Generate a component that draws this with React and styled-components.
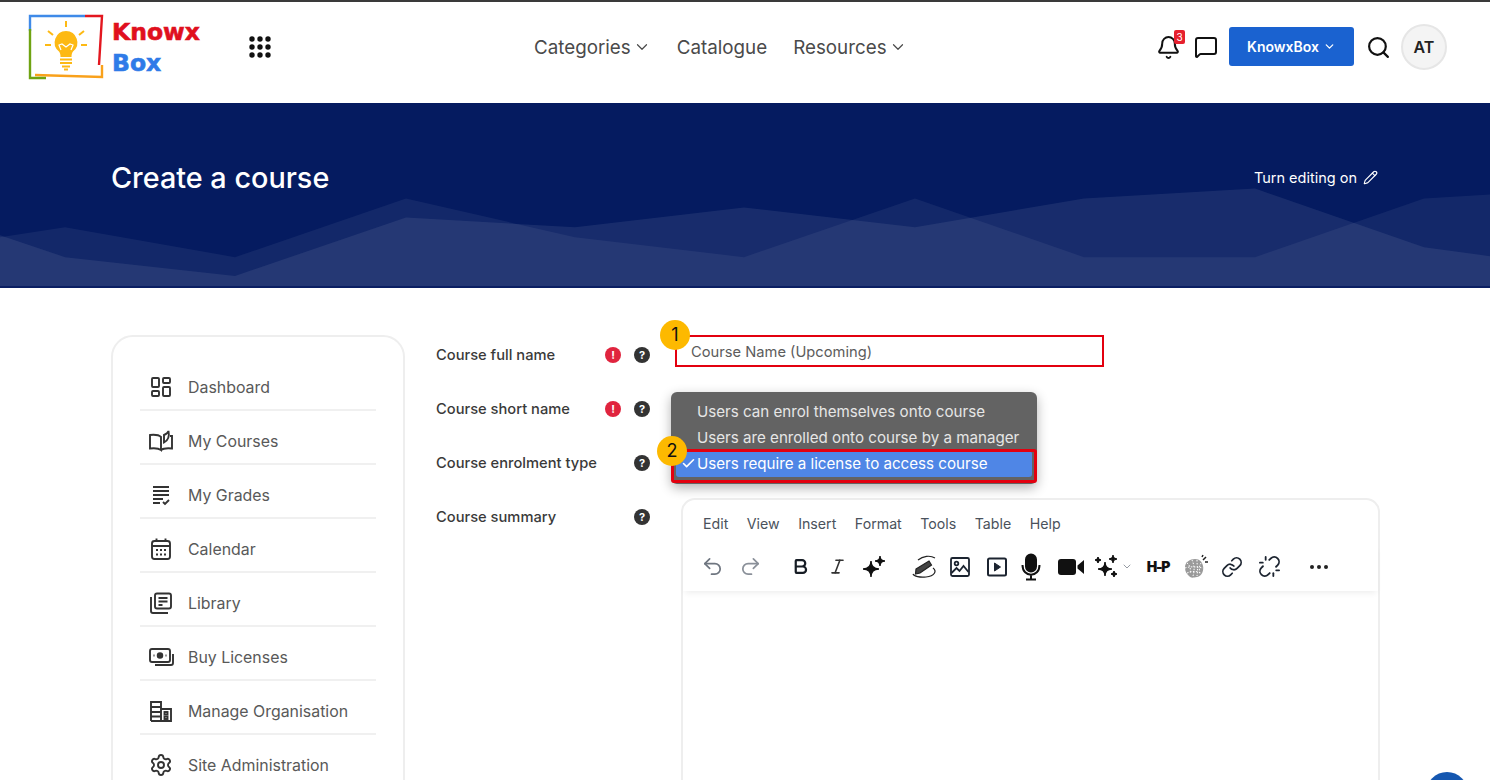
import React from "react";
import styled, { createGlobalStyle } from "styled-components";
import {
  Bell,
  Bold,
  Check,
  ChevronDown,
  Italic,
  LayoutDashboard,
  Link,
  MessageSquare,
  Pencil,
  Redo2,
  Search,
  Settings,
  Undo2,
  Unlink,
} from "lucide-react";

const GlobalStyle = createGlobalStyle`
  html, body {
    margin: 0;
    padding: 0;
    background: #fff;
    font-family: Inter, "Liberation Sans", sans-serif;
    overflow: hidden;
  }
`;

const Page = styled.div`
  position: relative;
  height: 780px;
  overflow: hidden;
  background: #fff;
`;

const TopBar = styled.header`
  display: flex;
  align-items: center;
  box-sizing: border-box;
  height: 103px;
  padding: 0 43px 11px 27px;
  border-top: 2px solid #3a3a3a;
  background: #fff;
`;

const Brand = styled.div`
  display: flex;
  align-items: center;
  gap: 5px;
  width: 222px;
`;

const BrandText = styled.div`
  display: flex;
  flex-direction: column;
  gap: 5px;
`;

const BrandLine = styled.span`
  font-family: "DejaVu Sans", sans-serif;
  font-weight: 700;
  font-size: 23.5px;
  line-height: 26px;
  color: ${(p) => p.$color};
  -webkit-text-stroke: 0.6px ${(p) => p.$color};
`;

const AppsButton = styled.div`
  display: flex;
  width: 22px;
`;

const MainNav = styled.nav`
  display: flex;
  align-items: center;
  gap: 26px;
  margin-left: 263px;
`;

const NavLink = styled.div`
  display: inline-flex;
  align-items: center;
  gap: 2px;
  font-size: 18.8px;
  color: #4a4a4a;
  white-space: nowrap;
`;

const NavActions = styled.div`
  display: flex;
  align-items: center;
  margin-left: auto;
  gap: 12px;
`;

const BellWrap = styled.div`
  position: relative;
  display: flex;
  margin-right: 1px;
`;

const BellBadge = styled.span`
  position: absolute;
  top: -5px;
  right: -4px;
  width: 11px;
  height: 14px;
  border-radius: 2px;
  background: #e6202e;
  color: #fff;
  font-size: 10px;
  line-height: 14px;
  text-align: center;
`;

const OrgButton = styled.div`
  display: flex;
  align-items: center;
  justify-content: center;
  gap: 4px;
  width: 125px;
  height: 39px;
  margin: 0 0 2px -1px;
  border-radius: 3px;
  background: #1a62d0;
  color: #fff;
  font-size: 14px;
  font-weight: 600;
`;

const Avatar = styled.div`
  display: flex;
  align-items: center;
  justify-content: center;
  box-sizing: border-box;
  width: 46px;
  height: 46px;
  margin-left: -2px;
  border: 2px solid #e6e6e6;
  border-radius: 50%;
  background: #f4f4f4;
  color: #222;
  font-size: 16px;
  font-weight: 600;
`;

const Hero = styled.section`
  position: relative;
  display: flex;
  align-items: center;
  justify-content: space-between;
  box-sizing: border-box;
  height: 185px;
  padding: 0 112px 35px 111px;
  border-bottom: 2px solid #0b1f63;
  background: #051b60;
  color: #fff;
`;

const WaveSvg = styled.svg`
  position: absolute;
  inset: 0;
  width: 100%;
  height: 100%;
`;

const HeroTitle = styled.h1`
  position: relative;
  margin: 0;
  font-size: 28.8px;
  font-weight: 500;
`;

const EditToggle = styled.div`
  position: relative;
  display: flex;
  align-items: center;
  gap: 6px;
  font-size: 14.5px;
`;

const Main = styled.main`
  display: flex;
  align-items: flex-start;
  padding: 40px 0 0 111px;
`;

const Sidebar = styled.aside`
  box-sizing: border-box;
  width: 294px;
  margin-top: 7px;
  padding: 28px 27px 20px;
  border: 2px solid #eeeeee;
  border-radius: 22px;
`;

const SideItem = styled.div`
  display: flex;
  align-items: center;
  box-sizing: border-box;
  height: 46px;
  margin-bottom: 8px;
  border-bottom: 2px solid #f0f0f0;
  font-size: 15.9px;
  color: #595959;
  white-space: nowrap;

  &:last-child {
    border-bottom-color: transparent;
  }
`;

const SideIcon = styled.span`
  display: flex;
  justify-content: center;
  width: 42px;
  margin-right: 6px;
`;

const Form = styled.div`
  position: relative;
  margin-left: 31px;
`;

const FormRow = styled.div`
  position: relative;
  display: flex;
  align-items: flex-start;
  min-height: 54px;
`;

const FieldLabel = styled.div`
  width: 169px;
  font-size: 14.7px;
  font-weight: 500;
  line-height: 54px;
  color: #3a3a3a;
  white-space: nowrap;
`;

const StatusIcon = styled.span`
  display: flex;
  align-items: center;
  justify-content: center;
  width: 16px;
  height: 16px;
  margin-top: 19px;
  margin-right: ${(p) => (p.$kind === "error" ? 13 : 0)}px;
  border-radius: 50%;
  background: ${(p) => (p.$kind === "error" ? "#e0243e" : "#333")};
  color: #fff;
  font-size: 11px;
  font-weight: 700;
`;

const StatusSpacer = styled.span`
  width: 29px;
`;

const NameInput = styled.input`
  box-sizing: border-box;
  width: 429px;
  height: 32px;
  margin: 7px 0 0 25px;
  padding: 2px 14px 0;
  border: 2px solid #e3000f;
  border-radius: 0;
  outline: none;
  font-family: inherit;
  font-size: 14.7px;
  color: #5c5c5c;
`;

const StepBadge = styled.span`
  position: absolute;
  left: ${(p) => p.$left}px;
  top: ${(p) => p.$top}px;
  z-index: 3;
  width: 30px;
  height: 30px;
  border-radius: 50%;
  background: #fdb900;
  color: #111;
  font-size: 18px;
  line-height: 30px;
  text-align: center;
`;

const Editor = styled.div`
  box-sizing: border-box;
  width: 699px;
  height: 420px;
  margin: 8px 0 0 31px;
  border: 2px solid #eeeeee;
  border-radius: 14px;
`;

const EditorMenu = styled.div`
  display: flex;
  gap: 18.5px;
  padding: 15px 0 0 20px;
  font-size: 14.2px;
  line-height: 18px;
  color: #4a525c;
`;

const Toolbar = styled.div`
  display: flex;
  align-items: center;
  height: 45px;
  margin-top: 11px;
  padding: 0 0 2px 11px;
  box-shadow: 0 4px 6px -2px rgba(0, 0, 0, 0.07);
`;

const ToolSlot = styled.span`
  display: flex;
  align-items: center;
  justify-content: center;
  flex: none;
  width: ${(p) => p.$w || 36}px;
  margin-left: ${(p) => p.$ml}px;
`;

const H5p = styled.span`
  font-size: 14px;
  font-weight: 900;
  letter-spacing: -1.2px;
  color: #111;
`;

const SelectMenu = styled.div`
  position: absolute;
  left: 235px;
  top: 64px;
  z-index: 2;
  box-sizing: border-box;
  width: 366px;
  height: 92px;
  padding: 7px 5px;
  border-radius: 6px;
  background: #636363;
  box-shadow: 0 4px 12px rgba(0, 0, 0, 0.3);
`;

const SelectOption = styled.div`
  position: relative;
  height: 26px;
  padding-left: 21px;
  border-radius: 3px;
  background: ${(p) => (p.$selected ? "#4f86e6" : "transparent")};
  color: ${(p) => (p.$selected ? "#fff" : "#e6e6e6")};
  font-size: 15.15px;
  line-height: 26px;
  white-space: nowrap;

  ${(p) =>
    p.$selected &&
    `&::after {
      content: "";
      position: absolute;
      inset: -2px -5px -6px -5px;
      border: 3px solid #e3000f;
      border-radius: 3px;
    }`}
`;

const CheckMark = styled.span`
  position: absolute;
  left: 5px;
  top: 5px;
  display: flex;
`;

const ChatBubble = styled.div`
  position: absolute;
  left: 1426px;
  top: 772px;
  width: 42px;
  height: 42px;
  border-radius: 50%;
  background: #1557b0;
`;

const star = (x, y, r) =>
  `M${x} ${y - r}Q${x} ${y} ${x + r} ${y}Q${x} ${y} ${x} ${y + r}Q${x} ${y} ${x - r} ${y}Q${x} ${y} ${x} ${y - r}Z`;

function Logo() {
  return (
    <svg width="80" height="68" viewBox="0 0 80 68" fill="none" strokeWidth="2.4">
      <path d="M3 18V3H58" stroke="#3f8ae8" />
      <path d="M58 3H75L72 52" stroke="#e3171f" />
      <path d="M8 62L75 64V52" stroke="#f9a11b" />
      <path d="M3 16V65H19" stroke="#6fa312" />
      <path
        d="M39 18a11.5 11.5 0 0 1 7 20.5c-1 1-1.5 3-1.5 5.5h-11c0-2.5-.5-4.5-1.5-5.5a11.5 11.5 0 0 1 7-20.5z"
        fill="#fdb913"
      />
      <path d="M34 37l-2-5 3-1 4 3 4-3 3 1-2 5" stroke="#fff" strokeWidth="1.2" />
      <path
        d="M33 46.5h12M33 50h12M35 53.5h8M37 56.5h4M39 8v6M21 18l5 4M57 18l-5 4M18 32h6M54 32h6"
        stroke="#fdb913"
        strokeWidth="2"
      />
    </svg>
  );
}

function DotsGrid() {
  const dots = [];
  for (let r = 0; r < 3; r++) {
    for (let c = 0; c < 3; c++) {
      dots.push(<circle key={`${r}${c}`} cx={3 + c * 8} cy={3 + r * 8} r="2.7" fill="#111" />);
    }
  }
  return (
    <svg width="22" height="22" viewBox="0 0 22 22">
      {dots}
    </svg>
  );
}

function HeroWaves() {
  return (
    <WaveSvg viewBox="0 0 1490 184" preserveAspectRatio="none">
      <polygon
        points="0,133 65,155 235,174 406,115 575,125 744,105 915,125 1084,96 1255,86 1424,145 1490,154 1490,184 0,184"
        fill="rgba(255,255,255,0.08)"
      />
      <polygon
        points="0,135 65,125 235,155 406,96 575,135 744,155 915,96 1084,155 1255,155 1424,96 1490,92 1490,184 0,184"
        fill="rgba(255,255,255,0.06)"
      />
    </WaveSvg>
  );
}

const iconProps = { width: 26, height: 24, viewBox: "0 0 26 24", fill: "none", stroke: "#333", strokeWidth: 1.9 };

const CoursesIcon = () => (
  <svg {...iconProps}>
    <path d="M13 8c-2-2-6-2.5-11-2v13.5c5-.5 9 0 11 1.5V8z" />
    <path d="M13 21c2-1.5 6-2 11-1.5V7h-2M16 6c2.5-1 4-2 4.5-4 .8 4 .5 9-4.5 11.500V6z" />
  </svg>
);

const GradesIcon = () => (
  <svg {...iconProps}>
    <path d="M5 4h16M5 8h16M5 12h16M5 16h10M5 20h7M15 19l2 2 4-4" />
  </svg>
);

const CalendarIcon = () => (
  <svg {...iconProps}>
    <rect x="4" y="4" width="18" height="18" rx="2.5" />
    <path d="M4 9h18M8.5 1.5V5M17.5 1.5V5" />
    <path d="M8 13h2M12 13h2M16 13h2M8 17.5h2M12 17.5h2M16 17.5h2" strokeWidth="2" />
  </svg>
);

const LibraryIcon = () => (
  <svg {...iconProps}>
    <rect x="7" y="2.5" width="16" height="15" rx="2" />
    <path d="M10.5 7h9M10.5 10.5h9M10.5 14h4M3 6v14a2 2 0 0 0 2 2h15" />
  </svg>
);

const LicenseIcon = () => (
  <svg {...iconProps}>
    <rect x="2" y="4" width="20" height="13" rx="2" />
    <path d="M25 9v9a2 2 0 0 1-2 2H7" />
    <circle cx="12" cy="10.5" r="2.3" fill="#333" />
    <path d="M5.5 10.5h1M17.5 10.5h1" />
  </svg>
);

const OrganisationIcon = () => (
  <svg {...iconProps}>
    <path d="M3 22V3h10v19M3 22h20V10h-10M3 8h10M3 13h10M3 17.5h10" />
    <rect x="16.5" y="13" width="3" height="2.5" />
    <rect x="16.5" y="17.5" width="3" height="2.5" />
  </svg>
);

const SparkIcon = ({ many }) => (
  <svg width="26" height="26" viewBox="0 0 26 26" fill="#111" stroke="#111" strokeWidth="1.4">
    {many ? (
      <>
        <path d={star(12, 15, 7)} />
        <path d={star(20, 5, 4)} />
        <path d={star(21, 20, 3)} />
        <path d={star(5, 6, 3)} />
      </>
    ) : (
      <>
        <path d={star(11, 15, 8)} />
        <path d={star(20, 7, 5)} />
      </>
    )}
  </svg>
);

const PenIcon = () => (
  <svg width="28" height="28" viewBox="0 0 28 28" fill="none" stroke="#222" strokeWidth="1.2">
    <path d="M6 16L19 8l2.5 4L10 20l-4.5 1z" fill="#444" />
    <path d="M8 7c5-4 12-5 17-2M23 15c4 3 2 8-7 9-6 .7-12-.5-13-3" />
  </svg>
);

const ImageIcon = () => (
  <svg width="22" height="22" viewBox="0 0 22 22" fill="none" stroke="#1c2430" strokeWidth="1.8">
    <rect x="2" y="2" width="18" height="18" rx="1.5" />
    <circle cx="7.5" cy="7.5" r="1.8" />
    <path d="M2.5 17l5-5 3 3 4-5 5 6" />
  </svg>
);

const PlayIcon = () => (
  <svg width="22" height="22" viewBox="0 0 22 22" fill="none" stroke="#1c2430" strokeWidth="2">
    <rect x="2" y="2.5" width="18" height="17" rx="1.5" />
    <path d="M8.5 7v8l6-4z" fill="#1c2430" strokeWidth="1" />
  </svg>
);

const MicIcon = () => (
  <svg width="24" height="28" viewBox="0 0 24 28" fill="none" stroke="#111" strokeWidth="2">
    <rect x="7" y="1.5" width="10" height="17" rx="5" fill="#111" />
    <path d="M3.5 12c0 13 17 13 17 0M12 21.5V26M7 26.5h10" />
  </svg>
);

const VideoIcon = () => (
  <svg width="28" height="22" viewBox="0 0 28 22" fill="#111">
    <rect x="1" y="3" width="18" height="16" rx="3" />
    <path d="M20.5 9.5L27 4v14l-6.5-5.5z" />
  </svg>
);

const BrainIcon = () => (
  <svg width="28" height="28" viewBox="0 0 28 28" fill="#9a9a9a">
    <path d="M4 14c0-5 5-8 10-8s7 3 8 7-1 10-6 11-6 1-8-1-4-4-4-9z" />
    <g stroke="#fff" strokeWidth="1" strokeDasharray="1.5 1.5" fill="none">
      <path d="M6 10c3 2 4 6 3 11M11 7c2 4 3 10 1 16M16 7c0 5 1 10 0 16M20 10c-2 3-2 8-1 11M4 15c6-2 12-1 18 0M6 20c5-2 10-2 14 0" />
    </g>
    <path d="M22 7l3-3M24 9h3M21 4l1-2" stroke="#222" strokeWidth="1.5" />
  </svg>
);

const MoreDots = () => (
  <svg width="20" height="6" viewBox="0 0 20 6" fill="#222">
    <circle cx="3" cy="3" r="2" />
    <circle cx="10" cy="3" r="2" />
    <circle cx="17" cy="3" r="2" />
  </svg>
);

const sideItems = [
  { label: "Dashboard", icon: <LayoutDashboard size={24} color="#333" strokeWidth={1.9} /> },
  { label: "My Courses", icon: <CoursesIcon /> },
  { label: "My Grades", icon: <GradesIcon /> },
  { label: "Calendar", icon: <CalendarIcon /> },
  { label: "Library", icon: <LibraryIcon /> },
  { label: "Buy Licenses", icon: <LicenseIcon /> },
  { label: "Manage Organisation", icon: <OrganisationIcon /> },
  { label: "Site Administration", icon: <Settings size={24} color="#333" strokeWidth={1.9} /> },
];

const menuItems = ["Edit", "View", "Insert", "Format", "Tools", "Table", "Help"];

const tools = [
  { el: <Undo2 size={23} color="#6f7680" strokeWidth={1.8} />, ml: 0 },
  { el: <Redo2 size={23} color="#8a9099" strokeWidth={1.8} />, ml: 2 },
  { el: <Bold size={19} color="#161c24" strokeWidth={2.8} />, ml: 14 },
  { el: <Italic size={19} color="#333" strokeWidth={2} />, ml: 1 },
  { el: <SparkIcon />, ml: 0 },
  { el: <PenIcon />, ml: 15 },
  { el: <ImageIcon />, ml: 0 },
  { el: <PlayIcon />, ml: 1 },
  { el: <MicIcon />, ml: -2 },
  { el: <VideoIcon />, ml: 4 },
  { el: <SparkIcon many />, ml: -1 },
  { el: <ChevronDown size={13} color="#8a9099" strokeWidth={1.8} />, ml: -3, w: 12 },
  { el: <H5p>H-P</H5p>, ml: 7 },
  { el: <BrainIcon />, ml: 1 },
  { el: <Link size={22} color="#1c2430" strokeWidth={1.9} />, ml: 1 },
  { el: <Unlink size={23} color="#1c2430" strokeWidth={1.9} />, ml: 1 },
  { el: <MoreDots />, ml: 14 },
];

export default function App() {
  return (
    <Page>
      <GlobalStyle />
      <TopBar>
        <Brand>
          <Logo />
          <BrandText>
            <BrandLine $color="#e0101e">Knowx</BrandLine>
            <BrandLine $color="#2f7be8">Box</BrandLine>
          </BrandText>
        </Brand>
        <AppsButton>
          <DotsGrid />
        </AppsButton>
        <MainNav>
          <NavLink>
            Categories <ChevronDown size={18} strokeWidth={1.6} />
          </NavLink>
          <NavLink>Catalogue</NavLink>
          <NavLink>
            Resources <ChevronDown size={18} strokeWidth={1.6} />
          </NavLink>
        </MainNav>
        <NavActions>
          <BellWrap>
            <Bell size={25} color="#111" strokeWidth={1.9} />
            <BellBadge>3</BellBadge>
          </BellWrap>
          <MessageSquare size={24} color="#111" strokeWidth={2} />
          <OrgButton>
            KnowxBox <ChevronDown size={13} strokeWidth={2.4} />
          </OrgButton>
          <Search size={25} color="#111" strokeWidth={2.1} />
          <Avatar>AT</Avatar>
        </NavActions>
      </TopBar>

      <Hero>
        <HeroWaves />
        <HeroTitle>Create a course</HeroTitle>
        <EditToggle>
          Turn editing on <Pencil size={15} strokeWidth={1.8} />
        </EditToggle>
      </Hero>

      <Main>
        <Sidebar>
          {sideItems.map((item) => (
            <SideItem key={item.label}>
              <SideIcon>{item.icon}</SideIcon>
              {item.label}
            </SideItem>
          ))}
        </Sidebar>

        <Form>
          <FormRow>
            <FieldLabel>Course full name</FieldLabel>
            <StatusIcon $kind="error">!</StatusIcon>
            <StatusIcon $kind="help">?</StatusIcon>
            <NameInput readOnly value="Course Name (Upcoming)" />
            <StepBadge $left={224} $top={-8}>1</StepBadge>
          </FormRow>
          <FormRow>
            <FieldLabel>Course short name</FieldLabel>
            <StatusIcon $kind="error">!</StatusIcon>
            <StatusIcon $kind="help">?</StatusIcon>
          </FormRow>
          <FormRow>
            <FieldLabel>Course enrolment type</FieldLabel>
            <StatusSpacer />
            <StatusIcon $kind="help">?</StatusIcon>
          </FormRow>
          <FormRow>
            <FieldLabel>Course summary</FieldLabel>
            <StatusSpacer />
            <StatusIcon $kind="help">?</StatusIcon>
            <Editor>
              <EditorMenu>
                {menuItems.map((m) => (
                  <span key={m}>{m}</span>
                ))}
              </EditorMenu>
              <Toolbar>
                {tools.map((t, i) => (
                  <ToolSlot key={i} $ml={t.ml} $w={t.w}>
                    {t.el}
                  </ToolSlot>
                ))}
              </Toolbar>
            </Editor>
          </FormRow>

          <SelectMenu>
            <SelectOption>Users can enrol themselves onto course</SelectOption>
            <SelectOption>Users are enrolled onto course by a manager</SelectOption>
            <SelectOption $selected>
              <CheckMark>
                <Check size={15} strokeWidth={2.6} />
              </CheckMark>
              Users require a license to access course
            </SelectOption>
          </SelectMenu>
          <StepBadge $left={221} $top={108}>2</StepBadge>
        </Form>
      </Main>

      <ChatBubble />
    </Page>
  );
}
